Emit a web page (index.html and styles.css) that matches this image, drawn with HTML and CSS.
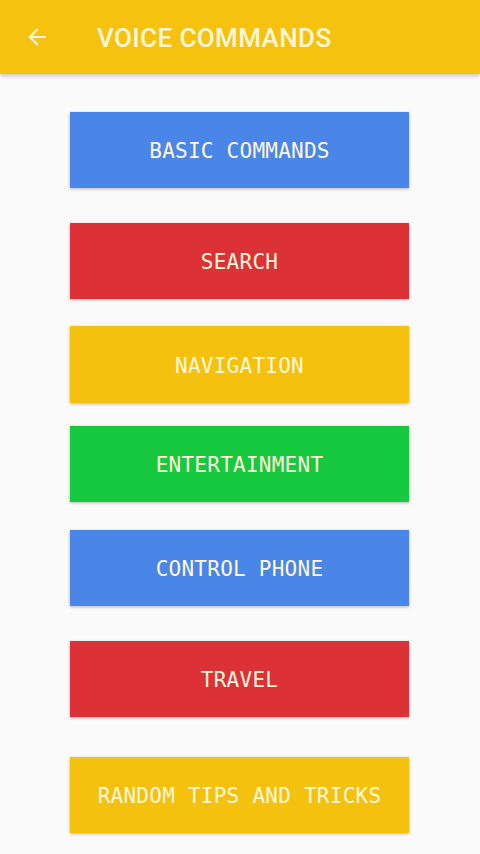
FILE: index.html
```
<!DOCTYPE html>
<html>
<head>
<meta charset="utf-8">
<link rel="stylesheet" href="styles.css">
</head>
<body>
<header class="appbar">
  <svg class="back" width="26" height="26" viewBox="0 0 24 24"><path d="M20 11H7.83l5.59-5.59L12 4l-8 8 8 8 1.41-1.41L7.83 13H20v-2z" fill="#FFF6D8"/></svg>
  <h1 class="title">VOICE COMMANDS</h1>
</header>
<main class="list">
  <button class="cmd blue m1">BASIC COMMANDS</button>
  <button class="cmd red m2">SEARCH</button>
  <button class="cmd yellow m3">NAVIGATION</button>
  <button class="cmd green m4">ENTERTAINMENT</button>
  <button class="cmd blue m5">CONTROL PHONE</button>
  <button class="cmd red m6">TRAVEL</button>
  <button class="cmd yellow m7">RANDOM TIPS AND TRICKS</button>
</main>
</body>
</html>
```
FILE: styles.css
```
* { box-sizing: border-box; }
html, body { margin: 0; padding: 0; }
body {
  width: 480px;
  height: 854px;
  overflow: hidden;
  background: #FAFAFA;
  font-family: Roboto, "Liberation Sans", sans-serif;
}
.appbar {
  height: 74px;
  background: #F5C210;
  display: flex;
  align-items: center;
  padding-left: 24px;
  box-shadow: 0 2px 4px rgba(0,0,0,0.22);
  position: relative;
}
.back { display: block; }
.title {
  margin: 0 0 0 47px;
  font-size: 26px;
  font-weight: 500;
  color: #FFF6D8;
  letter-spacing: 0.4px;
  padding-top: 1px;
}
.list {
  display: flex;
  flex-direction: column;
  align-items: flex-start;
  padding-left: 70px;
}
.cmd {
  width: 339px;
  height: 76px;
  border: none;
  margin: 0;
  padding: 2px 0 0 0;
  font-family: "DejaVu Sans Mono", "Liberation Mono", monospace;
  font-size: 21px;
  letter-spacing: 0.25px;
  color: #FFF6DC;
  display: flex;
  align-items: center;
  justify-content: center;
  box-shadow: 0 1px 3px rgba(0,0,0,0.28);
}
.blue { background: #4A86E8; }
.red { background: #DC3237; }
.yellow { background: #F4C20E; }
.green { background: #17C93E; }
.m1 { margin-top: 38px; }
.m2 { margin-top: 35px; }
.m3 { margin-top: 27px; height: 77px; }
.m4 { margin-top: 23px; }
.m5 { margin-top: 28px; }
.m6 { margin-top: 35px; }
.m7 { margin-top: 40px; }
```
